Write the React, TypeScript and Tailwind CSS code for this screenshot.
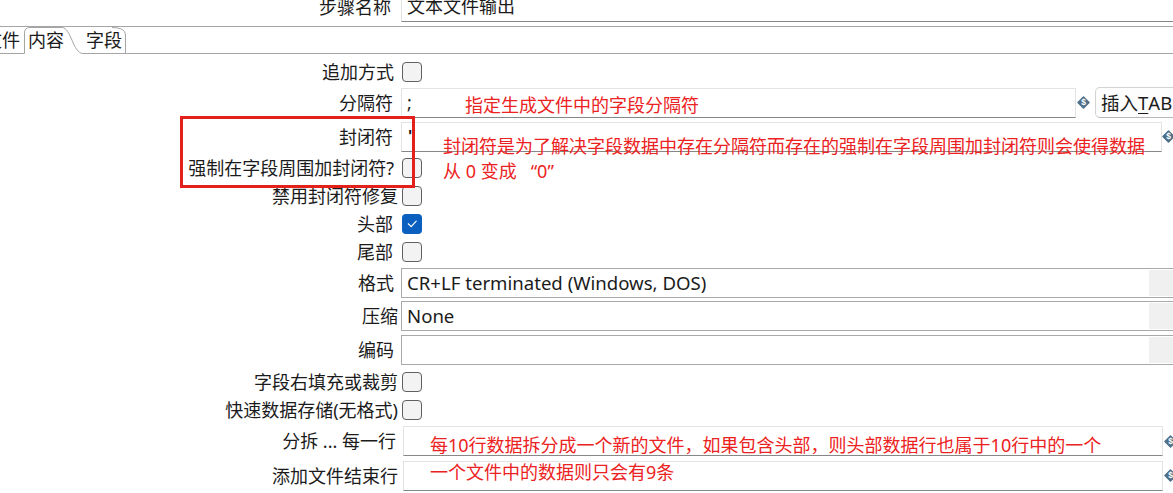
import React from "react";

function Label({ pr, children }: { pr: string; children: React.ReactNode }) {
  return (
    <div className={"w-[398px] shrink-0 text-right whitespace-nowrap text-[18px] leading-[24px] text-[#1b1b1b] " + pr}>
      {children}
    </div>
  );
}

function Check({ checked }: { checked?: boolean }) {
  if (checked) {
    return (
      <div className="ml-[4px] w-[20px] h-[20px] rounded-[4px] bg-[#0b5fbf] flex items-center justify-center shrink-0">
        <svg width="20" height="20" viewBox="0 0 20 20">
          <path d="M6.3 9.8 L9.2 12.6 L14.2 7.2" stroke="white" strokeWidth="1.2" fill="none" strokeLinecap="round" strokeLinejoin="round" />
        </svg>
      </div>
    );
  }
  return <div className="ml-[4px] w-[20px] h-[20px] rounded-[4px] border border-[#5f5f5f] bg-[#f3f3f3] shrink-0" />;
}

function Var() {
  return (
    <svg width="13" height="13" viewBox="0 0 13 13" className="shrink-0">
      <path d="M6.5 1 L12 6.5 L6.5 12 L1 6.5 Z" fill="#4e6f88" stroke="#4e6f88" strokeWidth="1.5" strokeLinejoin="round" />
      <text x="6.5" y="9.3" fontSize="8.5" fill="white" textAnchor="middle" fontFamily="Liberation Sans, sans-serif" fontWeight="bold">
        $
      </text>
    </svg>
  );
}

function TextField({ w, children }: { w: string; children?: React.ReactNode }) {
  return (
    <div
      className={
        "h-[30px] shrink-0 border border-[#e3e3e3] border-b-[#878787] bg-white flex items-center pl-[5px] text-[18px] text-[#1b1b1b] whitespace-nowrap overflow-hidden " +
        w
      }
    >
      {children}
    </div>
  );
}

function Combo({ children }: { children?: React.ReactNode }) {
  return (
    <div className="ml-[3px] h-[30px] w-[800px] shrink-0 border border-[#a9a9a9] bg-white flex">
      <div className="w-[747px] shrink-0 flex items-center pl-[5px] text-[18.6px] text-[#1b1b1b] whitespace-nowrap">
        {children}
      </div>
      <div className="flex-1 bg-[#f0f0f0] my-[1px]" />
    </div>
  );
}

export default function App() {
  return (
    <div className="relative w-[1173px] h-[493px] overflow-hidden bg-white font-['Noto_Sans','Noto_Sans_CJK_SC',sans-serif]">
      <div className="flex flex-col">
        {/* step name */}
        <div className="flex items-center h-[29px] -mt-[8px] shrink-0">
          <Label pr="pr-[7px]">步骤名称</Label>
          <div className="ml-[3px]">
            <TextField w="w-[800px]">文本文件输出</TextField>
          </div>
        </div>

        {/* tab header */}
        <div className="relative mt-[5px] h-[28px] border-t border-[#a5a5a5] shrink-0">
          <svg className="absolute left-0 top-0" width="1173" height="27" viewBox="0 0 1173 27">
            <path
              d="M0 26.5 H24.5 M24.5 26.5 V6 Q24.5 0.5 30 0.5 H62 C71 0.5 73 26.5 83 26.5 H1173 M112 0.5 Q125.5 0.5 125.5 8 V26.5"
              stroke="#a5a5a5"
              strokeWidth="1"
              fill="none"
            />
          </svg>
          <div className="relative flex items-center h-full text-[18px] text-[#1b1b1b] whitespace-nowrap">
            <span className="ml-[-16px]">文件</span>
            <span className="ml-[8px]">内容</span>
            <span className="ml-[22px]">字段</span>
          </div>
        </div>

        {/* form */}
        <div className="mt-[3px] flex flex-col">
          <div className="flex items-center h-[29px] shrink-0">
            <Label pr="pr-[4px]">追加方式</Label>
            <Check />
          </div>
          <div className="flex items-center h-[33px] shrink-0">
            <Label pr="pr-[5px]">分隔符</Label>
            <div className="ml-[3px] flex items-center">
              <TextField w="w-[675px]">;</TextField>
              <div className="ml-[1px]">
                <Var />
              </div>
              <div className="ml-[5px] h-[31px] w-[90px] shrink-0 rounded-[5px] border border-[#d3d3d3] border-b-[#b8b8b8] bg-[#fdfdfd] flex items-center pl-[5px] text-[18.5px] text-[#1b1b1b] whitespace-nowrap">
                插入<span className="underline underline-offset-[3px] decoration-1">T</span>AB
              </div>
            </div>
          </div>
          <div className="flex items-center h-[35px] shrink-0">
            <Label pr="pr-[5px]">封闭符</Label>
            <div className="ml-[3px] flex items-center">
              <TextField w="w-[761px]">
                <span className="ml-[1px] font-['Liberation_Sans',sans-serif] font-bold text-[16px]">"</span>
              </TextField>
              <div className="ml-[0px]">
                <Var />
              </div>
            </div>
          </div>
          <div className="flex items-center h-[28px] shrink-0">
            <Label pr="pr-[4px]">强制在字段周围加封闭符?</Label>
            <Check />
          </div>
          <div className="flex items-center h-[28px] shrink-0">
            <Label pr="pr-[0px]">禁用封闭符修复</Label>
            <Check />
          </div>
          <div className="flex items-center h-[28px] shrink-0">
            <Label pr="pr-[5px]">头部</Label>
            <Check checked />
          </div>
          <div className="flex items-center h-[28px] shrink-0">
            <Label pr="pr-[5px]">尾部</Label>
            <Check />
          </div>
          <div className="flex items-center h-[33px] shrink-0">
            <Label pr="pr-[4px]">格式</Label>
            <Combo>CR+LF terminated (Windows, DOS)</Combo>
          </div>
          <div className="flex items-center h-[34px] shrink-0">
            <Label pr="pr-[0px]">压缩</Label>
            <Combo>None</Combo>
          </div>
          <div className="flex items-center h-[34px] shrink-0">
            <Label pr="pr-[4px]">编码</Label>
            <Combo />
          </div>
          <div className="flex items-center h-[30px] shrink-0">
            <Label pr="pr-[0px]">字段右填充或裁剪</Label>
            <Check />
          </div>
          <div className="flex items-center h-[26px] shrink-0">
            <Label pr="pr-[0px]">快速数据存储(无格式)</Label>
            <Check />
          </div>
          <div className="flex items-center h-[36px] shrink-0">
            <Label pr="pr-[2px]">分拆 ... 每一行</Label>
            <div className="ml-[5px] flex items-center">
              <TextField w="w-[760px]" />
              <div className="ml-[1px]">
                <Var />
              </div>
            </div>
          </div>
          <div className="flex items-center h-[33px] shrink-0">
            <Label pr="pr-[0px]">添加文件结束行</Label>
            <div className="ml-[5px] flex items-center">
              <TextField w="w-[760px]" />
              <div className="ml-[1px]">
                <Var />
              </div>
            </div>
          </div>
        </div>
      </div>

      {/* red annotations overlay */}
      <div className="absolute left-[180px] top-[116px] w-[235px] h-[72px] border-[3px] border-[#e3211a]" />
      <div className="absolute left-[465px] top-[95px] text-[18px] leading-[20px] text-[#ec2222] whitespace-nowrap">
        指定生成文件中的字段分隔符
      </div>
      <div className="absolute left-[443px] top-[134px] text-[18px] leading-[25px] text-[#ec2222] whitespace-nowrap">
        <div>封闭符是为了解决字段数据中存在分隔符而存在的强制在字段周围加封闭符则会使得数据</div>
        <div>
          从 0 变成<span className="ml-[14px]">“0”</span>
        </div>
      </div>
      <div className="absolute left-[430px] top-[432px] text-[18px] leading-[27px] text-[#ec2222] whitespace-nowrap">
        <div>每10行数据拆分成一个新的文件，如果包含头部，则头部数据行也属于10行中的一个</div>
        <div>一个文件中的数据则只会有9条</div>
      </div>
    </div>
  );
}
